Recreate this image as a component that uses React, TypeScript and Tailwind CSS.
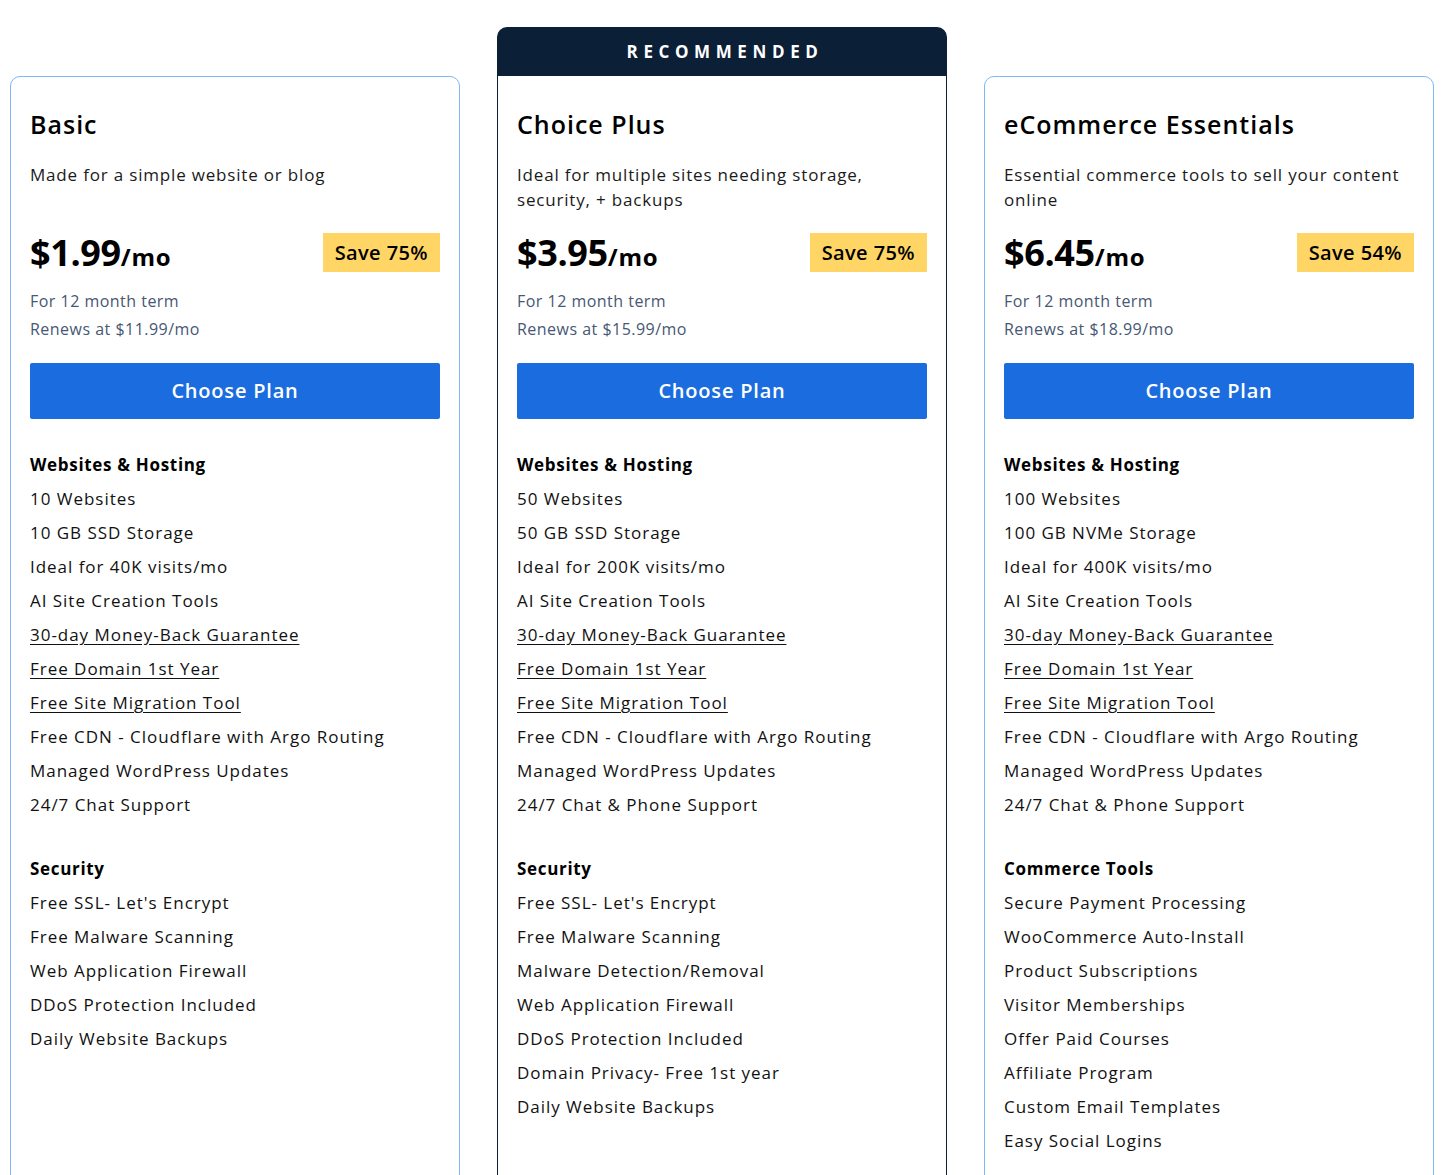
import { Fragment } from 'react';

type Item = { text: string; link?: boolean };
type Section = { title: string; items: Item[] };

interface Plan {
  name: string;
  desc: string;
  price: string;
  save: string;
  renews: string;
  recommended?: boolean;
  sections: Section[];
}

const hosting = (sites: string, storage: string, visits: string, support: string): Section => ({
  title: 'Websites & Hosting',
  items: [
    { text: sites },
    { text: storage },
    { text: visits },
    { text: 'AI Site Creation Tools' },
    { text: '30-day Money-Back Guarantee', link: true },
    { text: 'Free Domain 1st Year', link: true },
    { text: 'Free Site Migration Tool', link: true },
    { text: 'Free CDN - Cloudflare with Argo Routing' },
    { text: 'Managed WordPress Updates' },
    { text: support },
  ],
});

const plans: Plan[] = [
  {
    name: 'Basic',
    desc: 'Made for a simple website or blog',
    price: '$1.99',
    save: 'Save 75%',
    renews: 'Renews at $11.99/mo',
    sections: [
      hosting('10 Websites', '10 GB SSD Storage', 'Ideal for 40K visits/mo', '24/7 Chat Support'),
      {
        title: 'Security',
        items: [
          { text: "Free SSL- Let's Encrypt" },
          { text: 'Free Malware Scanning' },
          { text: 'Web Application Firewall' },
          { text: 'DDoS Protection Included' },
          { text: 'Daily Website Backups' },
        ],
      },
    ],
  },
  {
    name: 'Choice Plus',
    desc: 'Ideal for multiple sites needing storage, security, + backups',
    price: '$3.95',
    save: 'Save 75%',
    renews: 'Renews at $15.99/mo',
    recommended: true,
    sections: [
      hosting('50 Websites', '50 GB SSD Storage', 'Ideal for 200K visits/mo', '24/7 Chat & Phone Support'),
      {
        title: 'Security',
        items: [
          { text: "Free SSL- Let's Encrypt" },
          { text: 'Free Malware Scanning' },
          { text: 'Malware Detection/Removal' },
          { text: 'Web Application Firewall' },
          { text: 'DDoS Protection Included' },
          { text: 'Domain Privacy- Free 1st year' },
          { text: 'Daily Website Backups' },
        ],
      },
    ],
  },
  {
    name: 'eCommerce Essentials',
    desc: 'Essential commerce tools to sell your content online',
    price: '$6.45',
    save: 'Save 54%',
    renews: 'Renews at $18.99/mo',
    sections: [
      hosting('100 Websites', '100 GB NVMe Storage', 'Ideal for 400K visits/mo', '24/7 Chat & Phone Support'),
      {
        title: 'Commerce Tools',
        items: [
          { text: 'Secure Payment Processing' },
          { text: 'WooCommerce Auto-Install' },
          { text: 'Product Subscriptions' },
          { text: 'Visitor Memberships' },
          { text: 'Offer Paid Courses' },
          { text: 'Affiliate Program' },
          { text: 'Custom Email Templates' },
          { text: 'Easy Social Logins' },
        ],
      },
    ],
  },
];

function PlanCard({ plan }: { plan: Plan }) {
  return (
    <div className={plan.recommended ? 'flex w-[450px] flex-col' : 'mt-[49px] flex w-[450px] flex-col'}>
      {plan.recommended && (
        <div className="flex h-[49px] items-center justify-center rounded-t-[10px] bg-[#0b1f36] pl-[6px] text-[17px] font-bold tracking-[0.33em] text-white">
          RECOMMENDED
        </div>
      )}
      <div
        className={
          plan.recommended
            ? 'min-h-[1140px] border border-t-0 border-[#0b1f36] px-[19px] pt-[32px] pb-10'
            : 'min-h-[1140px] rounded-[10px] border border-[#7db7f4] px-[19px] pt-[31px] pb-10'
        }
      >
        {/* Title + description */}
        <h2 className="text-[25px] leading-[32px] font-semibold tracking-[0.04em] text-black">{plan.name}</h2>
        <p className="mt-[22px] min-h-[50px] text-[17px] leading-[25px] tracking-[0.048em] text-[#1a1a1a]">{plan.desc}</p>

        {/* Price */}
        <div className="mt-[21px] flex h-[39px] items-center justify-between">
          <div className="flex items-baseline font-bold text-black">
            <span className="text-[36px] tracking-[-0.01em]">{plan.price}</span>
            <span className="text-[24px] tracking-[0.03em]">/mo</span>
          </div>
          <span className="flex h-[39px] items-center bg-[#ffd566] px-[12px] text-[20px] font-semibold tracking-[0.02em] text-black">
            {plan.save}
          </span>
        </div>
        <div className="mt-[15px] text-[16px] leading-[28px] font-medium tracking-[0.03em] text-[#475774]">
          <div>For 12 month term</div>
          <div>{plan.renews}</div>
        </div>

        <button className="mt-[20px] flex h-[56px] w-full items-center justify-center rounded-[2px] bg-[#1b6ddf] text-[20px] font-semibold tracking-[0.04em] text-white">
          Choose Plan
        </button>

        {/* Features */}
        <div className="mt-[29px]">
          {plan.sections.map((s, i) => (
            <Fragment key={s.title}>
              <h3
                className={
                  i > 0
                    ? 'mt-[30px] text-[17px] leading-[34px] font-bold tracking-[0.04em] text-black'
                    : 'text-[17px] leading-[34px] font-bold tracking-[0.04em] text-black'
                }
              >
                {s.title}
              </h3>
              <ul>
                {s.items.map((it) => (
                  <li key={it.text} className="text-[17px] leading-[34px] tracking-[0.057em] text-[#111]">
                    {it.link ? <a className="underline underline-offset-[3px]">{it.text}</a> : it.text}
                  </li>
                ))}
              </ul>
            </Fragment>
          ))}
        </div>
      </div>
    </div>
  );
}

export default function App() {
  return (
    <div className="min-h-screen bg-white font-['Open_Sans',sans-serif]">
      <div className="flex items-start gap-[37px] pt-[27px] pl-[10px]">
        {plans.map((p) => (
          <PlanCard key={p.name} plan={p} />
        ))}
      </div>
    </div>
  );
}
